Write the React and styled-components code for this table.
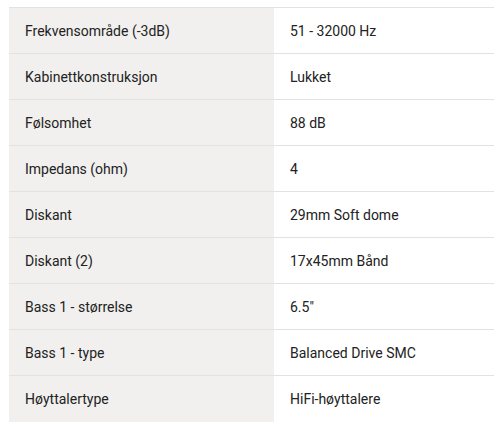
import React from "react";
import styled, { createGlobalStyle } from "styled-components";

const GlobalStyle = createGlobalStyle`
  body {
    margin: 0;
    background: #fff;
    font-family: Roboto, "Liberation Sans", sans-serif;
  }
`;

const Wrapper = styled.div`
  padding: 7px 0 0 9px;
`;

const SpecTable = styled.table`
  width: 100%;
  border-collapse: collapse;
  font-size: 14px;
  color: #222;
  border-top: 1px solid #e2e2e2;
`;

const Row = styled.tr`
  height: 46px;
  & + & td {
    border-top: 1px solid #e2e2e2;
  }
`;

const Label = styled.td`
  width: 265px;
  box-sizing: border-box;
  padding: 0 16px;
  background: #f1f0ee;
  vertical-align: middle;
`;

const Value = styled.td`
  padding: 0 16px;
  background: #fff;
  vertical-align: middle;
`;

const specs = [
  ["Frekvensområde (-3dB)", "51 - 32000 Hz"],
  ["Kabinettkonstruksjon", "Lukket"],
  ["Følsomhet", "88 dB"],
  ["Impedans (ohm)", "4"],
  ["Diskant", "29mm Soft dome"],
  ["Diskant (2)", "17x45mm Bånd"],
  ["Bass 1 - størrelse", "6.5\""],
  ["Bass 1 - type", "Balanced Drive SMC"],
  ["Høyttalertype", "HiFi-høyttalere"],
];

export default function App() {
  return (
    <>
      <GlobalStyle />
      <Wrapper>
        <SpecTable>
          <tbody>
            {specs.map(([k, v]) => (
              <Row key={k}>
                <Label>{k}</Label>
                <Value>{v}</Value>
              </Row>
            ))}
          </tbody>
        </SpecTable>
      </Wrapper>
    </>
  );
}
